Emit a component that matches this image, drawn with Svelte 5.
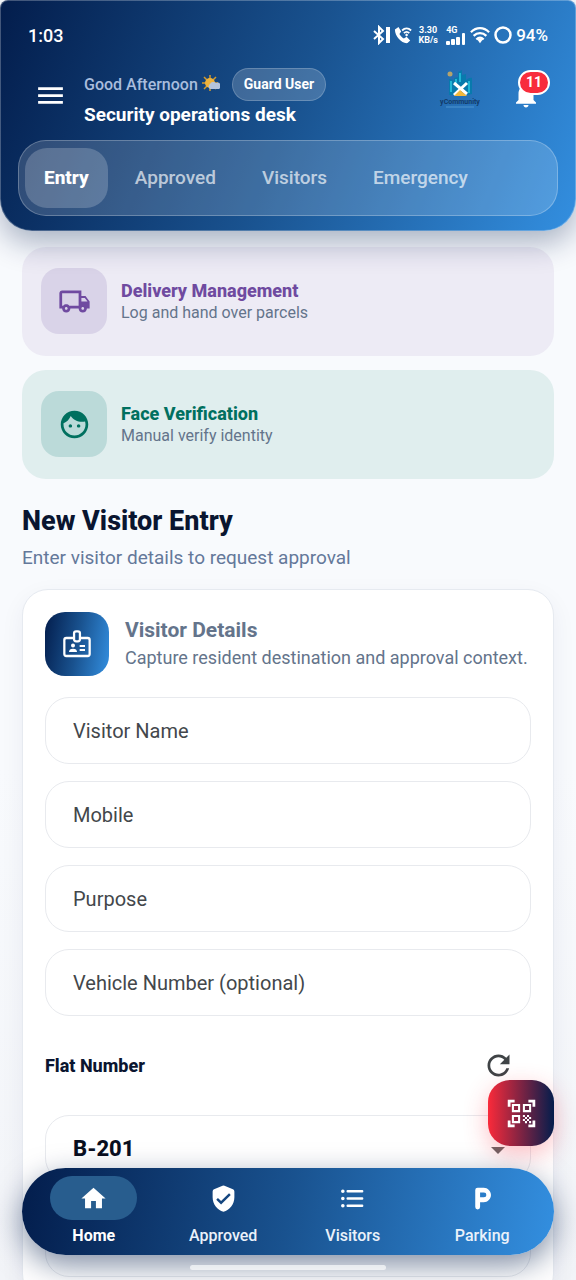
<script lang="ts">
	const tabs = ['Entry', 'Approved', 'Visitors', 'Emergency'];
	let activeTab = $state('Entry');

	const actions = [
		{
			tone: 'purple',
			title: 'Delivery Management',
			text: 'Log and hand over parcels',
			icon: 'M20 8h-3V4H3c-1.1 0-2 .9-2 2v11h2c0 1.66 1.34 3 3 3s3-1.34 3-3h6c0 1.66 1.34 3 3 3s3-1.34 3-3h2v-5l-3-4zm-.5 1.5l1.96 2.5H17V9.5h2.5zM6 18c-.55 0-1-.45-1-1s.45-1 1-1 1 .45 1 1-.45 1-1 1zm2.22-3c-.55-.61-1.33-1-2.22-1s-1.67.39-2.22 1H3V6h12v9H8.22zM18 18c-.55 0-1-.45-1-1s.45-1 1-1 1 .45 1 1-.45 1-1 1z'
		},
		{
			tone: 'green',
			title: 'Face Verification',
			text: 'Manual verify identity',
			icon: 'M9 11.75c-.69 0-1.25.56-1.25 1.25s.56 1.25 1.25 1.25 1.25-.56 1.25-1.25-.56-1.25-1.25-1.25zm6 0c-.69 0-1.25.56-1.25 1.25s.56 1.25 1.25 1.25 1.25-.56 1.25-1.25-.56-1.25-1.25-1.25zM12 2C6.48 2 2 6.48 2 12s4.48 10 10 10 10-4.48 10-10S17.52 2 12 2zm0 18c-4.41 0-8-3.59-8-8 0-.29.02-.58.05-.86 2.36-1.05 4.23-2.98 5.21-5.37C11.07 8.33 14.05 10 17.42 10c.78 0 1.53-.09 2.25-.26.21.71.33 1.47.33 2.26 0 4.41-3.59 8-8 8z'
		}
	];

	const fields = [
		{ id: 'name', label: 'Visitor Name', type: 'text' },
		{ id: 'mobile', label: 'Mobile', type: 'tel' },
		{ id: 'purpose', label: 'Purpose', type: 'text' },
		{ id: 'vehicle', label: 'Vehicle Number (optional)', type: 'text' }
	];

	const links = [
		{ label: 'Home', icon: 'M10 20v-6h4v6h5v-8h3L12 3 2 12h3v8z' },
		{
			label: 'Approved',
			icon: 'M11.2 1.4 4.2 4.4A2 2 0 0 0 3 6.2V11c0 5.55 3.84 10.74 9 12 5.16-1.26 9-6.45 9-12V6.2a2 2 0 0 0-1.2-1.8l-7-3a2 2 0 0 0-1.6 0zM10 17l-4-4 1.41-1.41L10 14.17l6.59-6.59L18 9z'
		},
		{
			label: 'Visitors',
			icon: 'M4 10.5a1.5 1.5 0 1 0 0 3 1.5 1.5 0 0 0 0-3zm0-6a1.5 1.5 0 1 0 0 3 1.5 1.5 0 0 0 0-3zm0 12a1.5 1.5 0 1 0 0 3 1.5 1.5 0 0 0 0-3zM8 19h12a1 1 0 0 0 0-2H8a1 1 0 0 0 0 2zm0-6h12a1 1 0 0 0 0-2H8a1 1 0 0 0 0 2zM7 6a1 1 0 0 0 1 1h12a1 1 0 0 0 0-2H8a1 1 0 0 0-1 1z'
		},
		{
			label: 'Parking',
			icon: 'M13 3H8a2 2 0 0 0-2 2v14a2 2 0 0 0 4 0v-4h3c3.31 0 6-2.69 6-6s-2.69-6-6-6zm.2 8H10V7h3.2a2 2 0 0 1 0 4z'
		}
	];
	let activeLink = $state('Home');
	let flat = $state('B-201');
</script>

<div class="app">
	<header>
		<div class="status">
			<span class="time">1:03</span>
			<svg width="17" height="20" viewBox="0 0 17 20" fill="none" stroke="#fff" stroke-width="2">
				<path d="m1 6 9 8-4 4V2l4 4-9 8" />
				<path d="M15 2v16" stroke-width="4" />
			</svg>
			<svg width="18" height="20" viewBox="0 0 20 20" fill="none" stroke="#fff">
				<path d="M1 4 5 1l3 5-2 3c1 2 3 4 5 5l3-2 4 4-3 3C9 20 1 12 1 4z" fill="#fff" stroke="none" />
				<path d="M9 5c3-3 7-3 10 0M11 8c2-2 4-2 6 0" stroke-width="2" />
				<circle cx="14" cy="10" r="1" fill="#fff" />
			</svg>
			<span class="speed">3.30<br />KB/s</span>
			<span class="signal">
				<span>4G</span>
				<svg width="20" height="14" viewBox="0 0 20 14" fill="#fff">
					<rect x="0" y="10" width="4" height="4" rx="1" />
					<rect x="5" y="8" width="4" height="6" rx="1" />
					<rect x="10" y="6" width="4" height="8" rx="1" />
					<rect x="16" y="2" width="3" height="12" rx="1" />
				</svg>
			</span>
			<svg width="20" height="20" viewBox="0 0 22 20" fill="none" stroke="#fff" stroke-width="2.5">
				<path d="M1 7c6-6 14-6 20 0M4 11c4-4 10-4 14 0M7 15c3-3 5-3 8 0" />
				<path d="m8 15 3 4 3-4q-3-2-6 0z" fill="#fff" stroke="none" />
			</svg>
			<svg width="18" height="20" viewBox="0 0 18 20" fill="none" stroke="#fff" stroke-width="2.5">
				<circle cx="9" cy="10" r="7.5" />
			</svg>
			<span class="battery">94%</span>
		</div>

		<div class="top">
			<button class="icon-button" aria-label="Open menu">
				<svg width="33" height="33" viewBox="0 0 24 24" fill="#fff">
					<path d="M3 18h18v-2H3v2zm0-5h18v-2H3v2zm0-7v2h18V6H3z" />
				</svg>
			</button>
			<div class="greeting">
				<div class="hello">
					<span>Good Afternoon</span>
					<svg width="18" height="18" viewBox="0 0 18 18">
						<path d="M8 0v16M0 8h16M2 2l12 12M14 2 2 14" stroke="#d39a2c" stroke-width="1.5" />
						<circle cx="8" cy="8" r="5" fill="#eeb23c" />
						<path d="M8 14a3 3 0 0 1 0-5 4 4 0 0 1 6-1 3 3 0 0 1 3 6z" fill="#b5c4dc" />
					</svg>
					<span class="role">Guard User</span>
				</div>
				<h1>Security operations desk</h1>
			</div>
			<svg class="logo" width="42" height="38" viewBox="0 0 42 38">
				<path d="M10 9q5 0 6 4v12h-6zM15 8l4-1V2l4-2v5l4-1v19H15zM27 10q4-3 6-2v16l-6 1z" fill="#087aad" />
				<path d="M12 11v11M17 9v6M21 3v9M30 11v12" stroke="#20b5d6" stroke-width="2" />
				<path d="m15 13 13 11M28 13 15 25" stroke="#fff" stroke-width="3" />
				<path d="m15 26 6-6 7 6z" fill="#f3b73b" />
				<circle cx="11" cy="4" r="2.500" fill="#b5a36c" />
				<text x="21" y="34" text-anchor="middle">yCommunity</text>
				<path d="M7 37h28" stroke="#4c94cf" />
			</svg>
			<button class="icon-button bell" aria-label="Notifications, 11 unread">
				<svg width="30" height="30" viewBox="0 0 24 24" fill="#fff">
					<path d="M12 22c1.1 0 2-.9 2-2h-4c0 1.1.89 2 2 2zm6-6v-5c0-3.07-1.64-5.64-4.5-6.32V4c0-.83-.67-1.5-1.5-1.5s-1.5.67-1.5 1.5v.68C7.63 5.36 6 7.92 6 11v5l-2 2v1h16v-1l-2-2z" />
				</svg>
				<span class="badge">11</span>
			</button>
		</div>

		<div class="tabs" role="tablist">
			{#each tabs as tab}
				<button role="tab" aria-selected={activeTab === tab} class:active={activeTab === tab} onclick={() => (activeTab = tab)}>{tab}</button>
			{/each}
		</div>
	</header>

	<main>
		<div class="actions">
			{#each actions as action}
				<button class="action {action.tone}">
					<span class="tile">
						<svg width="33" height="33" viewBox="0 0 24 24" fill="currentColor"><path d={action.icon} /></svg>
					</span>
					<span class="action-text">
						<strong>{action.title}</strong>
						<small>{action.text}</small>
					</span>
				</button>
			{/each}
		</div>

		<h2>New Visitor Entry</h2>
		<p class="lead">Enter visitor details to request approval</p>

		<form class="card" onsubmit={(e) => e.preventDefault()}>
			<div class="card-head">
				<span class="tile">
					<svg width="32" height="32" viewBox="0 0 24 24" fill="none" stroke="#fff" stroke-width="1.7" stroke-linejoin="round">
						<path d="M9.500 7.500H4a1.500 1.500 0 0 0-1.500 1.500v10.500A1.500 1.500 0 0 0 4 21h16a1.500 1.500 0 0 0 1.500-1.500V9A1.500 1.500 0 0 0 20 7.500h-5.500" />
						<rect x="9.800" y="2.500" width="4.400" height="7.500" rx="1.500" />
						<circle cx="9" cy="13.200" r="1.500" fill="#fff" stroke="none" />
						<path d="M6 18q0-2.500 3-2.500t3 2.500z" fill="#fff" stroke="none" />
						<path d="M14 13.500h4M14 16.500h4" stroke-width="1.500" />
					</svg>
				</span>
				<div>
					<h3>Visitor Details</h3>
					<p>Capture resident destination and approval context.</p>
				</div>
			</div>

			<div class="fields">
				{#each fields as field}
					<input id={field.id} type={field.type} aria-label={field.label} placeholder={field.label} />
				{/each}
			</div>

			<div class="flat-head">
				<label for="flat">Flat Number</label>
				<button type="button" class="icon-button" aria-label="Refresh flats">
					<svg width="33" height="33" viewBox="0 0 24 24" fill="#3f4346">
						<path d="M17.65 6.35C16.2 4.9 14.21 4 12 4c-4.42 0-7.99 3.58-7.99 8s3.57 8 7.99 8c3.73 0 6.84-2.55 7.73-6h-2.08c-.82 2.33-3.04 4-5.65 4-3.31 0-6-2.69-6-6s2.69-6 6-6c1.66 0 3.14.69 4.22 1.78L13 11h7V4l-2.35 2.35z" />
					</svg>
				</button>
			</div>
			<div class="select">
				<select id="flat" bind:value={flat}>
					<option>B-201</option>
				</select>
				<svg width="14" height="7" viewBox="0 0 14 7" fill="#666"><path d="M0 0h14L7 7z" /></svg>
			</div>
			<input class="notes" type="text" aria-label="Notes" />
		</form>
	</main>

	<button class="fab" aria-label="Scan QR code">
		<svg width="33" height="33" viewBox="0 0 24 24" fill="#fff">
			<path d="M9.5 6.5v3h-3v-3h3M11 5H5v6h6V5zm-1.5 9.5v3h-3v-3h3M11 13H5v6h6v-6zm6.5-6.5v3h-3v-3h3M19 5h-6v6h6V5zm-6 8h1.5v1.5H13V13zm1.5 1.5H16V16h-1.5v-1.5zM16 13h1.5v1.5H16V13zm-3 3h1.5v1.5H13V16zm1.5 1.5H16V19h-1.5v-1.5zM16 16h1.5v1.5H16V16zm1.5-1.5H19V16h-1.5v-1.5zm0 3H19V19h-1.5v-1.5zM22 7h-2V4h-3V2h5v5zm0 15v-5h-2v3h-3v2h5zM2 22h5v-2H4v-3H2v5zM2 2v5h2V4h3V2H2z" />
		</svg>
	</button>

	<nav>
		{#each links as link}
			<a href="#{link.label.toLowerCase()}" class:active={activeLink === link.label} onclick={() => (activeLink = link.label)}>
				<span class="pill">
					<svg width="29" height="29" viewBox="0 0 24 24" fill="#fff"><path d={link.icon} fill-rule="evenodd" /></svg>
				</span>
				{link.label}
			</a>
		{/each}
	</nav>
	<div class="home-bar"></div>
</div>

<style>
	:global(body) {
		background: #f8fafd;
	}
	.app {
		--navy: #031d4c;
		--mid: #19528f;
		--blue: #338fe0;
		--slate: #64748b;
		position: relative;
		display: flex;
		flex-direction: column;
		height: 100vh;
		overflow: hidden;
		background: linear-gradient(#f8fafd, #f8fafd 60%, #f2f4f8);
		color: #0a1530;
		font-family: Roboto, 'Noto Sans', sans-serif;
	}
	.app * {
		box-sizing: border-box;
	}
	button,
	input,
	select {
		font: inherit;
		color: inherit;
		margin: 0;
	}
	button {
		border: none;
		background: none;
		padding: 0;
		cursor: pointer;
	}
	svg {
		display: block;
		flex: none;
	}
	h1,
	h2,
	h3,
	p {
		margin: 0;
	}
	header {
		z-index: 1;
		flex: none;
		padding: 19px 17px 14px;
		border: 1px solid rgba(255, 255, 255, 0.25);
		border-radius: 8px 8px 32px 32px;
		background: linear-gradient(112deg, var(--navy), var(--mid) 50%, var(--blue)) border-box;
		box-shadow: 0 12px 30px rgba(3, 29, 76, 0.32);
		color: #fff;
	}
	.status {
		display: flex;
		align-items: center;
		gap: 4px;
		height: 30px;
		padding: 0 10px;
		font-size: 18px;
		font-weight: 500;
	}
	.time {
		margin-right: auto;
	}
	.speed {
		width: 20px;
		margin: 0 4px 0 2px;
		font-size: 9px;
		line-height: 10px;
		font-weight: 700;
		text-align: center;
	}
	.signal {
		display: flex;
		width: 20px;
		flex-direction: column;
		font-size: 9px;
		line-height: 8px;
		font-weight: 700;
	}
	.signal svg {
		margin-top: -3px;
	}
	.battery {
		font-size: 17px;
	}
	.top {
		display: flex;
		align-items: center;
		height: 62px;
		margin: 14px 0;
		padding: 0 16px;
	}
	.greeting {
		flex: 1;
		min-width: 0;
		margin: 6px 0 0 17px;
	}
	.hello {
		display: flex;
		align-items: center;
		gap: 4px;
		font-size: 16px;
		font-weight: 500;
		color: #a9bddd;
	}
	.role {
		margin-left: 8px;
		padding: 0 11px;
		border: 1px solid rgba(255, 255, 255, 0.2);
		border-radius: 17px;
		background: rgba(255, 255, 255, 0.18);
		color: #fff;
		font-size: 14px;
		line-height: 31px;
		font-weight: 700;
	}
	h1 {
		font-size: 19px;
		line-height: 28px;
		font-weight: 700;
	}
	.logo {
		margin: -12px 30px 0 0;
	}
	.logo text {
		fill: #123a68;
		font-size: 7px;
		font-weight: 700;
	}
	.bell {
		position: relative;
		margin-right: 1px;
	}
	.badge {
		position: absolute;
		top: -10px;
		left: 7px;
		width: 32px;
		border: 2px solid #fff;
		border-radius: 13px;
		background: #f82c3c;
		font-size: 14px;
		line-height: 21px;
		font-weight: 700;
	}
	.tabs {
		display: flex;
		gap: 8px;
		padding: 7px 6px;
		border: 1px solid rgba(255, 255, 255, 0.25);
		border-radius: 28px;
		background: rgba(255, 255, 255, 0.16);
	}
	.tabs button {
		padding: 0 19px;
		border-radius: 22px;
		color: rgba(255, 255, 255, 0.68);
		font-size: 19px;
		line-height: 60px;
		font-weight: 500;
	}
	.tabs .active {
		background: rgba(255, 255, 255, 0.2);
		color: #fff;
		font-weight: 800;
	}
	main {
		flex: 1;
		min-height: 0;
		padding: 16px 22px 0;
		overflow-y: auto;
		scrollbar-width: none;
	}
	.actions {
		display: grid;
		gap: 14px;
	}
	.action {
		display: flex;
		align-items: center;
		gap: 14px;
		padding: 21px 19px 22px;
		border-radius: 24px;
		text-align: left;
	}
	.tile {
		display: grid;
		place-items: center;
		flex: none;
		width: 66px;
		height: 66px;
		border-radius: 18px;
	}
	.purple {
		background: #edebf5;
		color: #6f4aa0;
	}
	.purple .tile {
		background: #d9d3e8;
	}
	.green {
		background: #e0eeee;
		color: #00705f;
	}
	.green .tile {
		background: #bbdad9;
	}
	.action-text {
		display: grid;
		padding-top: 2px;
	}
	.action strong {
		font-size: 18px;
		line-height: 22px;
		font-weight: 800;
	}
	.action small {
		color: var(--slate);
		font-size: 16px;
		line-height: 22px;
		font-weight: 400;
	}
	h2 {
		margin-top: 24px;
		font-size: 27px;
		line-height: 36px;
		font-weight: 800;
	}
	.lead {
		margin: 7px 0 19px;
		color: #64789a;
		font-size: 19px;
		line-height: 24px;
	}
	.card {
		padding: 22px;
		border: 1px solid #e6eaf0;
		border-radius: 26px;
		background: #fff;
		box-shadow: 0 8px 24px rgba(20, 40, 80, 0.06);
	}
	.card-head {
		display: flex;
		align-items: center;
		gap: 16px;
		color: var(--slate);
	}
	.card-head .tile {
		width: 64px;
		height: 64px;
		border-radius: 20px;
		background: linear-gradient(100deg, var(--navy), var(--mid) 50%, var(--blue));
	}
	h3 {
		font-size: 21px;
		line-height: 28px;
		font-weight: 700;
	}
	.card-head p {
		font-size: 18px;
		line-height: 28px;
		white-space: nowrap;
	}
	.fields {
		display: grid;
		gap: 17px;
		margin-top: 21px;
	}
	input,
	select {
		width: 100%;
		height: 67px;
		padding: 0 27px;
		border: 1px solid #e8eaee;
		border-radius: 24px;
		outline: none;
		background: #fff;
		font-size: 20px;
	}
	input::placeholder {
		color: #43474b;
		opacity: 1;
	}
	.flat-head {
		display: flex;
		align-items: center;
		justify-content: space-between;
		height: 66px;
		margin: 16px 0 17px;
		padding-right: 16px;
		font-size: 18px;
		font-weight: 800;
	}
	.select {
		position: relative;
	}
	select {
		appearance: none;
		color: #0a0f1e;
		font-size: 22px;
		font-weight: 800;
	}
	.select svg {
		position: absolute;
		right: 26px;
		top: 32px;
	}
	.notes {
		display: block;
		margin-top: 28px;
	}
	.fab {
		position: absolute;
		right: 22px;
		bottom: 134px;
		display: grid;
		place-items: center;
		width: 66px;
		height: 66px;
		border-radius: 22px;
		background: linear-gradient(90deg, #fa2a3a, #031d4c);
		box-shadow: 0 8px 24px rgba(250, 42, 58, 0.3);
	}
	nav {
		position: absolute;
		right: 22px;
		bottom: 25px;
		left: 22px;
		display: grid;
		grid-template-columns: repeat(4, 1fr);
		padding: 8px 7px;
		border-radius: 44px;
		background: linear-gradient(99deg, var(--navy), var(--mid) 50%, var(--blue));
		box-shadow: 0 10px 30px rgba(3, 29, 76, 0.5);
	}
	nav a {
		display: grid;
		justify-items: center;
		gap: 5px;
		color: #eaf1fa;
		font-size: 16px;
		line-height: 22px;
		font-weight: 500;
		text-decoration: none;
	}
	nav .active {
		color: #fff;
		font-weight: 700;
	}
	.pill {
		display: grid;
		place-items: center;
		width: 87px;
		height: 44px;
		border-radius: 22px;
	}
	.active .pill {
		background: #285d8e;
	}
	.home-bar {
		position: absolute;
		right: 33%;
		bottom: 10px;
		left: 33%;
		height: 5px;
		border-radius: 3px;
		background: rgba(255, 255, 255, 0.65);
	}
</style>
